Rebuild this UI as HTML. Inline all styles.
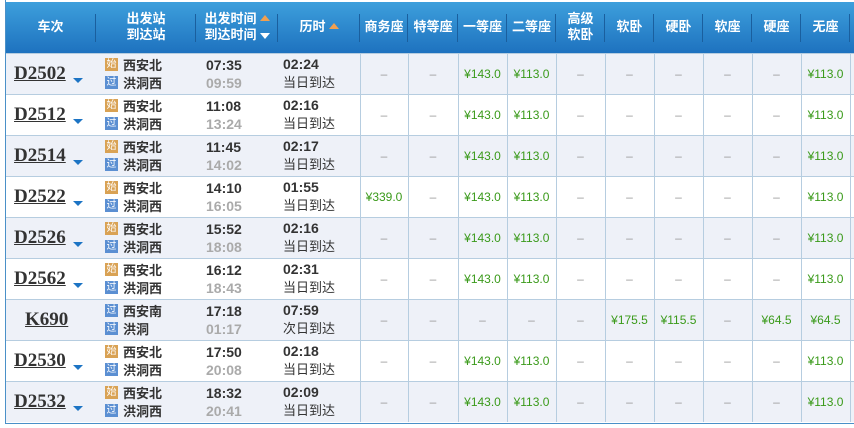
<!DOCTYPE html>
<html><head><meta charset="utf-8"><style>
*{margin:0;padding:0;box-sizing:border-box}
body{width:854px;height:428px;background:#fff;font-family:"Liberation Sans","Noto Sans CJK SC",sans-serif;overflow:hidden;position:relative}
table{position:absolute;left:5px;top:2px;border-collapse:collapse;table-layout:fixed;width:860px}
th{height:51px;background:linear-gradient(#3d9fdc,#1e72bf);color:#fff;font-size:13px;font-weight:bold;line-height:16px;position:relative;text-align:center;white-space:nowrap}
th.s::after{content:"";position:absolute;right:0;top:12px;height:28px;border-right:1px solid #1a5f9e}
td{height:41px;border-top:1px solid #b6cde0;text-align:center;font-size:12px;color:#999;vertical-align:middle;white-space:nowrap}
td.v{border-left:1px solid #b6cde0}
tr.o td{background:#eef1f8}
.p{color:#3a9a1a;font-size:12px}
.tn{font-family:"Liberation Serif",serif;font-weight:bold;font-size:19px;color:#333;text-decoration:underline;text-align:left;padding-left:9px;position:relative}
.tn i{position:absolute;left:68px;top:24px;width:0;height:0;border-left:5px solid transparent;border-right:5px solid transparent;border-top:5px solid #1c74c4}
.st{text-align:left;padding-left:9px;font-size:13px;font-weight:bold;color:#333}
.st div{display:flex;align-items:center;height:18px}
.ic{display:block;width:13px;height:13px;font-size:10px;line-height:13px;text-align:center;color:#fff;margin-right:5px;font-weight:normal;overflow:hidden}
.a{background:#d9a254}.b{background:#5b8fd2}
.tm{text-align:left;padding-left:10px;font-size:14px;font-weight:bold;color:#333;line-height:18px}
.tm span{color:#aaa}
.du{text-align:left;padding-left:5px;font-size:13px;color:#333;line-height:18px}
.du b{font-size:14px}
.ar{display:inline-block;width:0;height:0;border-left:5px solid transparent;border-right:5px solid transparent;vertical-align:2px;margin-left:3px}
</style></head><body>
<table>
<colgroup><col style="width:91px"><col style="width:100px"><col style="width:82px"><col style="width:82px"><col style="width:48px"><col style="width:50px"><col style="width:49px"><col style="width:49px"><col style="width:49px"><col style="width:49px"><col style="width:49px"><col style="width:49px"><col style="width:49px"><col style="width:49px"><col style="width:15px"></colgroup>
<tr><th class="s">车次</th><th class="s">出发站<br>到达站</th><th class="s">出发时间<span class="ar" style="border-bottom:6px solid #f0a050"></span><br>到达时间<span class="ar" style="border-top:6px solid #fff;vertical-align:0"></span></th><th class="s">历时<span class="ar" style="border-bottom:6px solid #f0a050"></span></th><th class="s">商务座</th><th class="s">特等座</th><th class="s">一等座</th><th class="s">二等座</th><th class="s">高级<br>软卧</th><th class="s">软卧</th><th class="s">硬卧</th><th class="s">软座</th><th class="s">硬座</th><th class="s">无座</th><th></th></tr>
<tr class="o"><td class="tn">D2502<i></i></td><td class="st"><div><span class="ic a">始</span>西安北</div><div><span class="ic b">过</span>洪洞西</div></td><td class="tm">07:35<br><span>09:59</span></td><td class="du"><b>02:24</b><br>当日到达</td><td class="v">–</td><td class="v">–</td><td class="v p">¥143.0</td><td class="v p">¥113.0</td><td class="v">–</td><td class="v">–</td><td class="v">–</td><td class="v">–</td><td class="v">–</td><td class="v p">¥113.0</td><td class="v"></td></tr>
<tr><td class="tn">D2512<i></i></td><td class="st"><div><span class="ic a">始</span>西安北</div><div><span class="ic b">过</span>洪洞西</div></td><td class="tm">11:08<br><span>13:24</span></td><td class="du"><b>02:16</b><br>当日到达</td><td class="v">–</td><td class="v">–</td><td class="v p">¥143.0</td><td class="v p">¥113.0</td><td class="v">–</td><td class="v">–</td><td class="v">–</td><td class="v">–</td><td class="v">–</td><td class="v p">¥113.0</td><td class="v"></td></tr>
<tr class="o"><td class="tn">D2514<i></i></td><td class="st"><div><span class="ic a">始</span>西安北</div><div><span class="ic b">过</span>洪洞西</div></td><td class="tm">11:45<br><span>14:02</span></td><td class="du"><b>02:17</b><br>当日到达</td><td class="v">–</td><td class="v">–</td><td class="v p">¥143.0</td><td class="v p">¥113.0</td><td class="v">–</td><td class="v">–</td><td class="v">–</td><td class="v">–</td><td class="v">–</td><td class="v p">¥113.0</td><td class="v"></td></tr>
<tr><td class="tn">D2522<i></i></td><td class="st"><div><span class="ic a">始</span>西安北</div><div><span class="ic b">过</span>洪洞西</div></td><td class="tm">14:10<br><span>16:05</span></td><td class="du"><b>01:55</b><br>当日到达</td><td class="v p">¥339.0</td><td class="v">–</td><td class="v p">¥143.0</td><td class="v p">¥113.0</td><td class="v">–</td><td class="v">–</td><td class="v">–</td><td class="v">–</td><td class="v">–</td><td class="v p">¥113.0</td><td class="v"></td></tr>
<tr class="o"><td class="tn">D2526<i></i></td><td class="st"><div><span class="ic a">始</span>西安北</div><div><span class="ic b">过</span>洪洞西</div></td><td class="tm">15:52<br><span>18:08</span></td><td class="du"><b>02:16</b><br>当日到达</td><td class="v">–</td><td class="v">–</td><td class="v p">¥143.0</td><td class="v p">¥113.0</td><td class="v">–</td><td class="v">–</td><td class="v">–</td><td class="v">–</td><td class="v">–</td><td class="v p">¥113.0</td><td class="v"></td></tr>
<tr><td class="tn">D2562<i></i></td><td class="st"><div><span class="ic a">始</span>西安北</div><div><span class="ic b">过</span>洪洞西</div></td><td class="tm">16:12<br><span>18:43</span></td><td class="du"><b>02:31</b><br>当日到达</td><td class="v">–</td><td class="v">–</td><td class="v p">¥143.0</td><td class="v p">¥113.0</td><td class="v">–</td><td class="v">–</td><td class="v">–</td><td class="v">–</td><td class="v">–</td><td class="v p">¥113.0</td><td class="v"></td></tr>
<tr class="o"><td class="tn" style="padding-left:20px">K690</td><td class="st"><div><span class="ic b">过</span>西安南</div><div><span class="ic b">过</span>洪洞</div></td><td class="tm">17:18<br><span>01:17</span></td><td class="du"><b>07:59</b><br>次日到达</td><td class="v">–</td><td class="v">–</td><td class="v">–</td><td class="v">–</td><td class="v">–</td><td class="v p">¥175.5</td><td class="v p">¥115.5</td><td class="v">–</td><td class="v p">¥64.5</td><td class="v p">¥64.5</td><td class="v"></td></tr>
<tr><td class="tn">D2530<i></i></td><td class="st"><div><span class="ic a">始</span>西安北</div><div><span class="ic b">过</span>洪洞西</div></td><td class="tm">17:50<br><span>20:08</span></td><td class="du"><b>02:18</b><br>当日到达</td><td class="v">–</td><td class="v">–</td><td class="v p">¥143.0</td><td class="v p">¥113.0</td><td class="v">–</td><td class="v">–</td><td class="v">–</td><td class="v">–</td><td class="v">–</td><td class="v p">¥113.0</td><td class="v"></td></tr>
<tr class="o"><td class="tn">D2532<i></i></td><td class="st"><div><span class="ic a">始</span>西安北</div><div><span class="ic b">过</span>洪洞西</div></td><td class="tm">18:32<br><span>20:41</span></td><td class="du"><b>02:09</b><br>当日到达</td><td class="v">–</td><td class="v">–</td><td class="v p">¥143.0</td><td class="v p">¥113.0</td><td class="v">–</td><td class="v">–</td><td class="v">–</td><td class="v">–</td><td class="v">–</td><td class="v p">¥113.0</td><td class="v"></td></tr>
</table>
<div style="position:absolute;left:5px;top:0;width:1px;height:424px;background:#4a90c8"></div>
<div style="position:absolute;left:5px;top:423px;width:849px;height:1px;background:#4a90c8"></div>
</body></html>
